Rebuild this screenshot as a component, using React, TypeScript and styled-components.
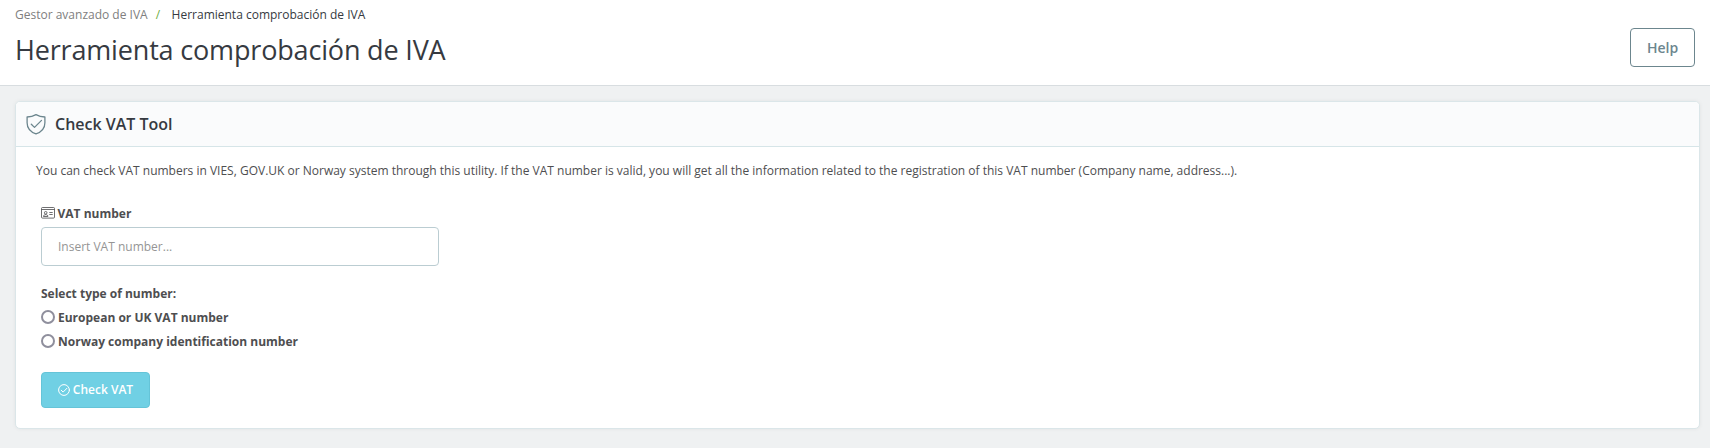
import React from "react";
import styled, { createGlobalStyle } from "styled-components";

const GlobalStyle = createGlobalStyle`
  * { box-sizing: border-box; }
  body {
    margin: 0;
    background: #eff1f2;
    color: #4e4e50;
    font-family: "Open Sans", "Noto Sans", sans-serif;
    font-size: 12px;
  }
`;

const Page = styled.div`
  height: 448px;
  overflow: hidden;
`;

const PageHeader = styled.header`
  height: 86px;
  padding: 5px 15px 0;
  display: flex;
  justify-content: space-between;
  background: #fff;
  border-bottom: 1px solid #d8dde0;
`;

const Breadcrumb = styled.nav`
  display: flex;
  line-height: 20px;
  color: #363a41;
`;

const Crumb = styled.span`
  color: #808080;
`;

const Separator = styled.span`
  margin: 0 11.5px 0 8px;
  color: #6fae3f;
`;

const Title = styled.h1`
  margin: 5px 0 0;
  font-size: 27px;
  letter-spacing: -0.17px;
  line-height: 40px;
  font-weight: 400;
  color: #363a41;
`;

const HelpButton = styled.button`
  width: 65px;
  height: 39px;
  margin-top: 23px;
  padding: 0;
  border: 1px solid #6c868e;
  border-radius: 4px;
  background: #fff;
  color: #6c868e;
  font: 600 14px "Open Sans", sans-serif;
`;

const Panel = styled.section`
  height: 328px;
  margin: 15px 10px 0 15px;
  overflow: hidden;
  background: #fff;
  border: 1px solid #dbe6e9;
  border-radius: 5px;
  box-shadow: 0 0 4px rgba(0, 0, 0, 0.06);
`;

const PanelHeading = styled.h2`
  height: 45px;
  margin: 0;
  padding: 0 10px;
  display: flex;
  align-items: center;
  gap: 9px;
  background: #fafbfc;
  border-bottom: 1px solid #d6e5e8;
  color: #363a41;
  font-size: 16px;
  font-weight: 600;
`;

const PanelBody = styled.div`
  padding: 14px 20px 0;
`;

const Intro = styled.p`
  margin: 0;
  line-height: 20px;
`;

const Form = styled.form`
  padding: 22px 5px 0;
`;

const FieldLabel = styled.label`
  display: flex;
  align-items: center;
  gap: 2.5px;
  height: 20px;
  font-weight: 700;
`;

const TextInput = styled.input`
  display: block;
  width: 398px;
  height: 39px;
  margin: 4px 0 17px;
  padding: 0 16px;
  border: 1px solid #bbcdd2;
  border-radius: 4px;
  background: #fff;
  font: 400 12px "Open Sans", sans-serif;
  &::placeholder { color: #959595; opacity: 1; }
`;

const Options = styled.div`
  padding-top: 2px;
`;

const OptionLabel = styled.label`
  display: flex;
  align-items: center;
  gap: 3px;
  height: 24px;
  font-weight: 700;
`;

const Radio = styled.input`
  appearance: none;
  width: 14px;
  height: 14px;
  margin: 0;
  border: 2px solid #8f8f9d;
  border-radius: 50%;
  background: #fff;
`;

const SubmitButton = styled.button`
  width: 109px;
  height: 36px;
  margin-top: 19px;
  padding: 0 0 1px;
  display: flex;
  align-items: center;
  justify-content: center;
  gap: 3px;
  border: 1px solid #65c4d8;
  border-radius: 4px;
  background: #70d0e4;
  color: #fff;
  font: 600 12px "Open Sans", sans-serif;
`;

const ShieldIcon = () => (
  <svg width="20" height="22" viewBox="0 0 20 22" fill="none" stroke="#6c868e" strokeWidth="1.3" strokeLinejoin="round" strokeLinecap="round">
    <path d="M10 1.6C7.4 3.1 4.4 3.9 1.1 4V9.7C1.1 15 4.8 19 10 20.9C15.2 19 18.9 15 18.9 9.7V4C15.6 3.9 12.6 3.1 10 1.6Z" />
    <path d="M5.3 11.2L8.5 14.4L15.5 7.4" />
  </svg>
);

const CardIcon = () => (
  <svg width="14" height="12" viewBox="0 0 14 12" fill="none" stroke="#4a4a4d" strokeWidth="0.8">
    <rect x="0.5" y="0.5" width="13" height="10.6" rx="1" />
    <path d="M0.5 2.5H13.5M8.3 5.5H11.7M8.3 7.5H11.7" />
    <circle cx="4.7" cy="5.8" r="1.3" />
    <path d="M2.5 9.5V8.7L4 7.7H5.4L6.9 8.7V9.5Z" />
  </svg>
);

const CheckCircleIcon = () => (
  <svg width="12" height="12" viewBox="0 0 12 12" fill="none" stroke="currentColor" strokeWidth="1" strokeLinecap="round" strokeLinejoin="round">
    <circle cx="6" cy="6" r="5.4" />
    <path d="M3.2 6.2L5.1 8.1L9 4.2" />
  </svg>
);

export default function App() {
  return (
    <Page>
      <GlobalStyle />
      <PageHeader>
        <div>
          <Breadcrumb>
            <Crumb>Gestor avanzado de IVA</Crumb>
            <Separator>/</Separator>
            <span>Herramienta comprobación de IVA</span>
          </Breadcrumb>
          <Title>Herramienta comprobación de IVA</Title>
        </div>
        <HelpButton type="button">Help</HelpButton>
      </PageHeader>
      <Panel>
        <PanelHeading>
          <ShieldIcon />
          Check VAT Tool
        </PanelHeading>
        <PanelBody>
          <Intro>
            You can check VAT numbers in VIES, GOV.UK or Norway system through this utility. If the VAT number is valid,
            you will get all the information related to the registration of this VAT number (Company name, address...).
          </Intro>
          <Form>
            <FieldLabel htmlFor="vat">
              <CardIcon />
              VAT number
            </FieldLabel>
            <TextInput id="vat" placeholder="Insert VAT number..." />
            <FieldLabel as="div">Select type of number:</FieldLabel>
            <Options>
              <OptionLabel>
                <Radio type="radio" name="kind" />
                European or UK VAT number
              </OptionLabel>
              <OptionLabel>
                <Radio type="radio" name="kind" />
                Norway company identification number
              </OptionLabel>
            </Options>
            <SubmitButton type="button">
              <CheckCircleIcon />
              Check VAT
            </SubmitButton>
          </Form>
        </PanelBody>
      </Panel>
    </Page>
  );
}
